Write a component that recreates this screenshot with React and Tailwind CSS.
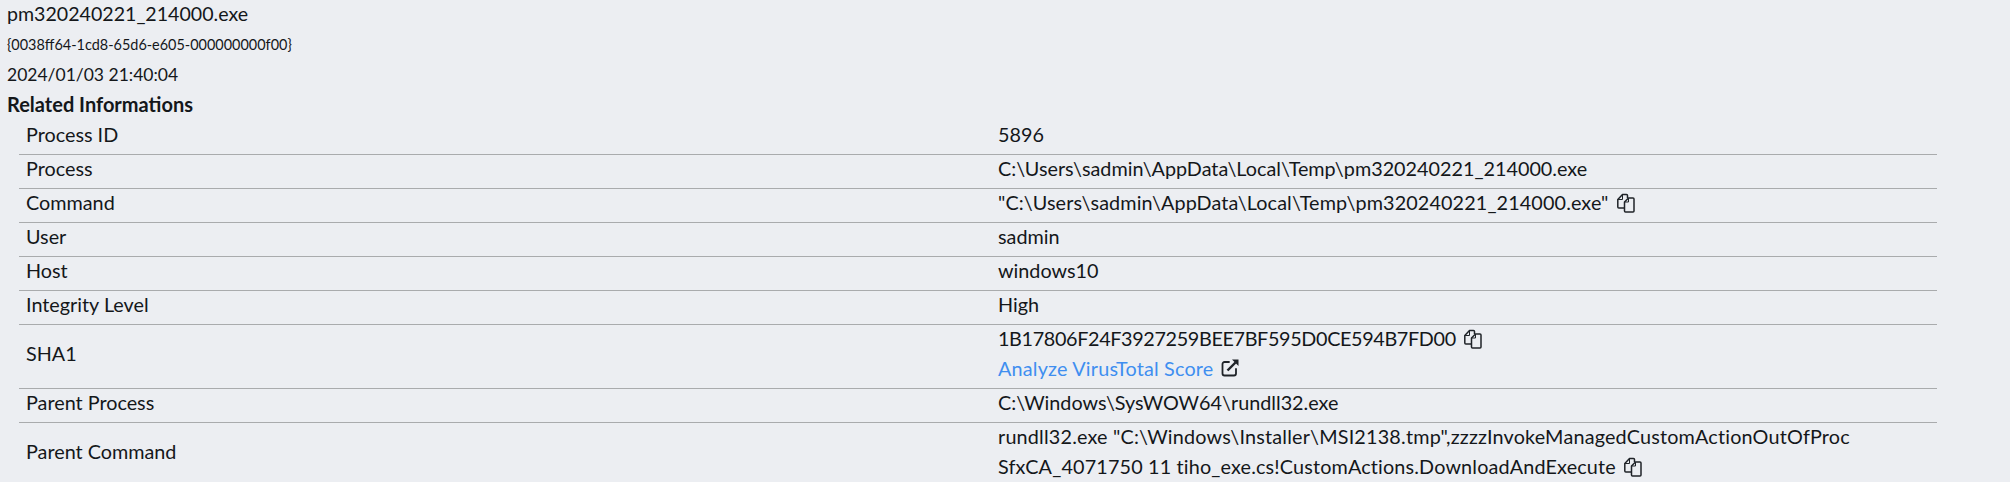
import React from 'react';

const Copy = () => (
  <svg viewBox="0 0 20 20" className="inline-block align-[-3px] ml-[7px] w-[20px] h-[20px] text-[#1f2328]" fill="none" stroke="currentColor" strokeWidth="1.500" strokeLinejoin="round">
    <path d="M8 15H2.800a1 1 0 0 1-1-1V6.500L6.500 1.500h4a1 1 0 0 1 1 1V5" />
    <path d="M6.500 1.500V6.500H1.800" strokeWidth="1" />
    <path d="M8.500 9 12.500 5H17a1 1 0 0 1 1 1v12a1 1 0 0 1-1 1H9.500a1 1 0 0 1-1-1z" />
    <path d="M12.500 5V9H8.500" strokeWidth="1" />
  </svg>
);

const External = () => (
  <svg viewBox="0 0 20 20" className="inline-block align-[-2px] ml-[6px] w-5 h-5 text-[#1f2328]" fill="none" stroke="currentColor">
    <path d="M9 4H4.500A2 2 0 0 0 2.500 6v9.500a2 2 0 0 0 2 2H14a2 2 0 0 0 2-2V11" strokeWidth="1.800" strokeLinecap="round" />
    <path d="M7.500 12.500 15.500 4.500" strokeWidth="2.400" />
    <path d="M12 1.500h6.500V8z" fill="currentColor" stroke="none" />
  </svg>
);

const rows = [
  { label: 'Process ID', value: [['5896']] },
  { label: 'Process', value: [['C:\\Users\\sadmin\\AppData\\Local\\Temp\\pm320240221_214000.exe']] },
  { label: 'Command', value: [['"C:\\Users\\sadmin\\AppData\\Local\\Temp\\pm320240221_214000.exe"', 'tracking-[0.12px]']], copy: true },
  { label: 'User', value: [['sadmin']] },
  { label: 'Host', value: [['windows10']] },
  { label: 'Integrity Level', value: [['High']] },
  { label: 'SHA1', value: [['1B17806F24F3927259BEE7BF595D0CE594B7FD00', 'tracking-[-0.35px]']], copy: true, vt: true },
  { label: 'Parent Process', value: [['C:\\Windows\\SysWOW64\\rundll32.exe']] },
  {
    label: 'Parent Command',
    value: [
      ['rundll32.exe "C:\\Windows\\Installer\\MSI2138.tmp",zzzzInvokeManagedCustomActionOutOfProc', 'tracking-[0.19px]'],
      ['SfxCA_4071750 11 tiho_exe.cs!CustomActions.DownloadAndExecute', 'tracking-[0.16px]'],
    ],
    copy: true,
  },
];

export default function App() {
  return (
    <div className="h-[482px] overflow-hidden bg-[#eceef2] text-[#14171a] font-['Lato','Noto_Sans',sans-serif] text-[19.800px] leading-[30px]">
      <div className="pl-[7px] -mt-[1px]">
        <div className="h-[31px] text-[19.600px]">pm320240221_214000.exe</div>
        <div className="h-[30px] text-[14.450px]">{'{0038ff64-1cd8-65d6-e605-000000000f00}'}</div>
        <div className="h-[29px] text-[17.500px]">2024/01/03 21:40:04</div>
        <div className="h-[30px] text-[20px] font-bold">Related Informations</div>
      </div>
      <div className="ml-[19px] w-[1918px] mt-[1.500px]">
        {rows.map((row, i) => (
          <div key={row.label} className={`flex items-center pb-[5px] ${i < rows.length - 1 ? 'border-b border-[#a9abad]' : ''}`}>
            <div className="w-[975px] shrink-0 pl-[7px] -mt-[2px]">{row.label}</div>
            <div className="flex-1 pl-[4px] -mt-[2px]">
              {row.value.map(([line, tracking], j) => (
                <div key={j} className={tracking}>
                  {line}
                  {row.copy && j === row.value.length - 1 && <Copy />}
                </div>
              ))}
              {row.vt && (
                <div>
                  <a className="text-[#3f8ef0] tracking-[0.2px]">Analyze VirusTotal Score</a>
                  <External />
                </div>
              )}
            </div>
          </div>
        ))}
      </div>
    </div>
  );
}
